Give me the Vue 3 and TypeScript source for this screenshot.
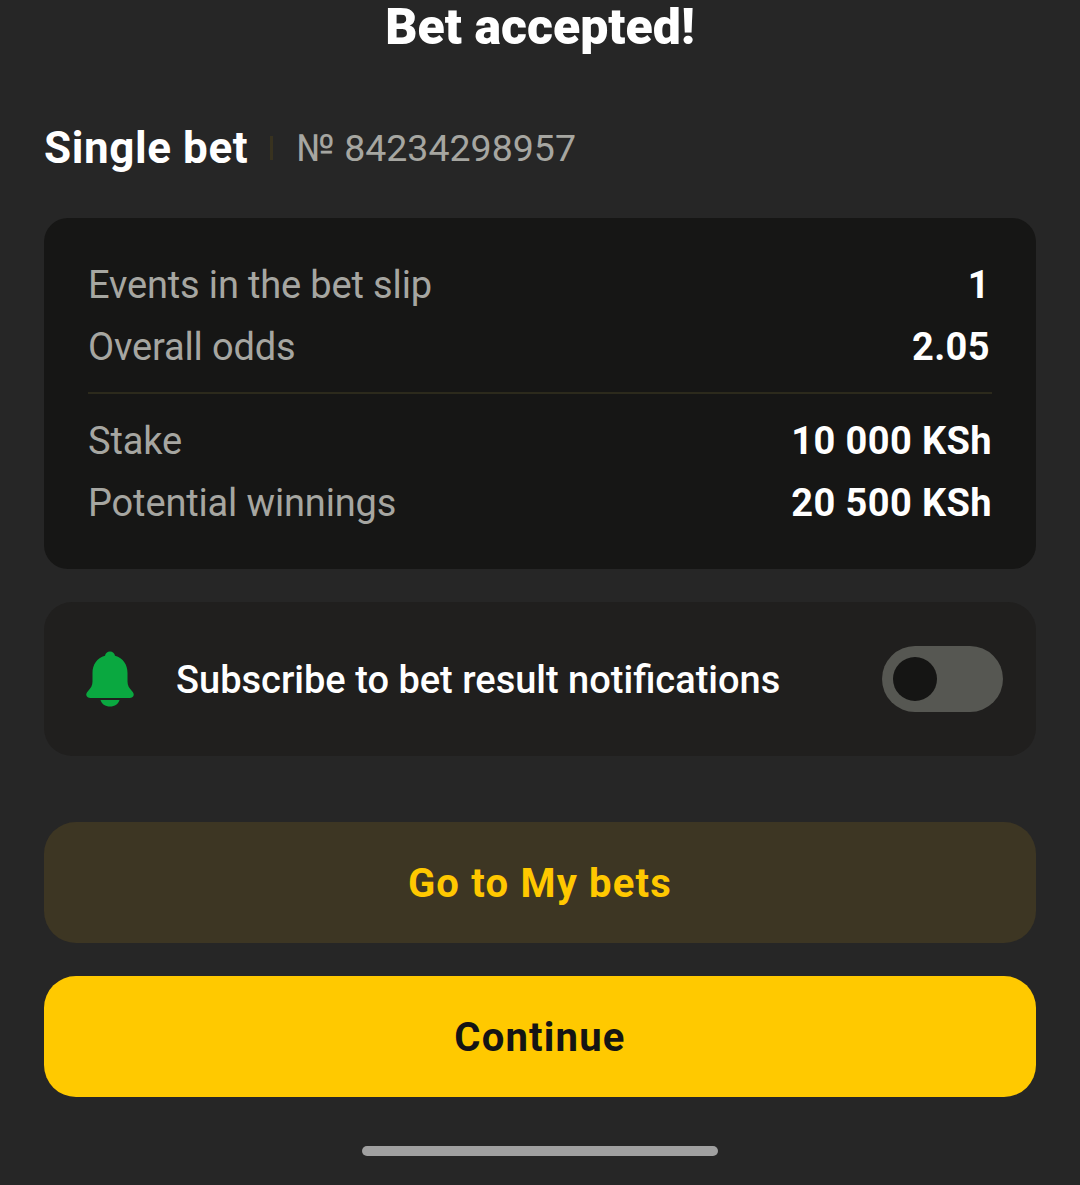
<script setup lang="ts">
const top = [
  { label: 'Events in the bet slip', value: '1' },
  { label: 'Overall odds', value: '2.05' },
]
const bottom = [
  { label: 'Stake', value: '10 000 KSh' },
  { label: 'Potential winnings', value: '20 500 KSh' },
]
</script>

<template>
  <div class="page">
    <h1 class="title">Bet accepted!</h1>
    <div class="head">
      <span class="kind">Single bet</span>
      <span class="sep"></span>
      <span class="num">№ 84234298957</span>
    </div>
    <section class="card">
      <div class="group inset">
        <div v-for="r in top" :key="r.label" class="row">
          <span class="label">{{ r.label }}</span>
          <span class="value">{{ r.value }}</span>
        </div>
      </div>
      <div class="rule"></div>
      <div class="group">
        <div v-for="r in bottom" :key="r.label" class="row">
          <span class="label">{{ r.label }}</span>
          <span class="value">{{ r.value }}</span>
        </div>
      </div>
    </section>
    <section class="notify">
      <svg class="bell" width="48" height="56" viewBox="0 0 48 56" aria-hidden="true">
        <path d="M24 0.5c2.600 0 4.600 1.700 5 4.300 8.200 2.300 12.500 9 12.500 17.200v8.500c0 4 1.700 6.500 4.400 9.500 1.700 1.900 2.100 3.200 1.700 4.500-.5 1.500-1.900 2.500-4 2.500H4.400c-2.100 0-3.500-1-4-2.500-.4-1.300 0-2.600 1.700-4.500 2.700-3 4.400-5.500 4.400-9.500V22c0-8.200 4.300-14.900 12.500-17.200.4-2.600 2.400-4.300 5-4.300z" fill="#0aa840"/>
        <path d="M14.500 49h19c-.8 3.800-4.800 6.500-9.500 6.500S15.300 52.800 14.500 49z" fill="#0aa840"/>
      </svg>
      <span class="notify-text">Subscribe to bet result notifications</span>
      <div class="toggle"><span class="knob"></span></div>
    </section>
    <button class="btn secondary">Go to My bets</button>
    <button class="btn primary">Continue</button>
    <div class="home"></div>
  </div>
</template>

<style>
html, body { margin: 0; background: #262626; }
</style>

<style scoped>
.page {
  width: 1080px;
  height: 1185px;
  box-sizing: border-box;
  padding: 0 44px;
  background: #262626;
  font-family: Roboto, "Liberation Sans", sans-serif;
  display: flex;
  flex-direction: column;
  overflow: hidden;
}
.title {
  margin: 0;
  height: 54px;
  line-height: 54px;
  font-size: 50px;
  font-weight: 900;
  color: #fff;
  text-align: center;
}
.head {
  margin-top: 67px;
  height: 54px;
  display: flex;
  align-items: center;
}
.kind { font-size: 44px; font-weight: 700; letter-spacing: 0.6px; color: #fff; }
.sep { width: 3px; height: 24px; background: #38321f; margin: 0 23px 0 22px; }
.num { font-size: 37.5px; color: #a6a6a1; }
.card {
  margin-top: 43px;
  height: 351px;
  box-sizing: border-box;
  padding: 44px 44px 0;
  background: #161615;
  border-radius: 24px;
  display: flex;
  flex-direction: column;
}
.group { display: flex; flex-direction: column; gap: 16px; }
.inset { padding-right: 2px; }
.row { display: flex; justify-content: space-between; align-items: center; height: 46px; }
.label { font-size: 38px; letter-spacing: -0.15px; color: #a6a6a1; }
.value { font-size: 38px; font-weight: 700; letter-spacing: 0.4px; color: #fff; }
.rule { height: 2px; background: #2c2a1c; margin: 22px 0 24px; }
.notify {
  margin-top: 33px;
  height: 154px;
  box-sizing: border-box;
  padding: 0 33px 0 42px;
  background: #201f1e;
  border-radius: 28px;
  display: flex;
  align-items: center;
}
.bell { flex: none; }
.notify-text { margin-left: 42px; padding-top: 2px; font-size: 38px; font-weight: 500; color: #fff; flex: 1; }
.toggle {
  width: 121px;
  height: 66px;
  border-radius: 33px;
  background: #565752;
  display: flex;
  align-items: center;
  padding-left: 11px;
  box-sizing: border-box;
}
.knob { width: 44px; height: 44px; border-radius: 50%; background: #151514; }
.btn {
  display: block;
  width: 100%;
  height: 121px;
  border: 0;
  border-radius: 32px;
  font-family: inherit;
  font-size: 40px;
  font-weight: 700;
  letter-spacing: 1.2px;
  padding: 2px 0 0;
  flex: none;
}
.secondary { margin-top: 66px; background: #3d3623; color: #ffc800; }
.primary { margin-top: 33px; background: #ffc900; color: #141414; }
.home {
  margin: 49px auto 0;
  width: 356px;
  height: 10px;
  border-radius: 5px;
  background: #a0a0a0;
  flex: none;
}
</style>
